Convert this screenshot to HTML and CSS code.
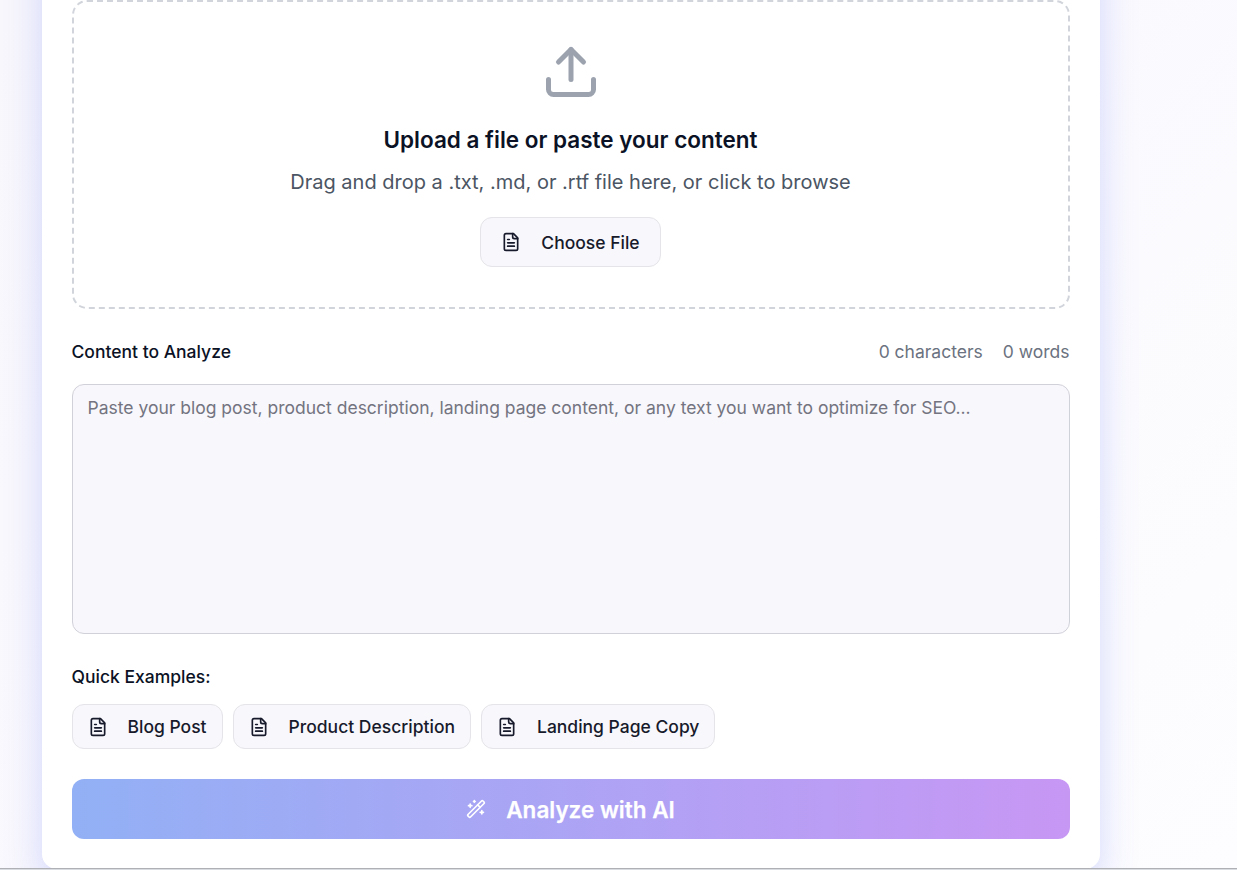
FILE: index.html
```html
<!DOCTYPE html>
<html lang="en">
<head>
<meta charset="utf-8">
<title>Content Analyzer</title>
<link rel="stylesheet" href="styles.css">
</head>
<body>
<svg class="sprite" aria-hidden="true">
  <symbol id="file-text" viewBox="0 0 24 24"><path d="M15 2H6a2 2 0 0 0-2 2v16a2 2 0 0 0 2 2h12a2 2 0 0 0 2-2V7Z"/><path d="M14 2v4a2 2 0 0 0 2 2h4"/><path d="M10 9H8"/><path d="M16 13H8"/><path d="M16 17H8"/></symbol>
</svg>
<div class="viewport">
<main class="card">
  <section class="dropzone">
    <svg class="upload-icon" viewBox="0 0 24 24"><path d="M21 15v4a2 2 0 0 1-2 2H5a2 2 0 0 1-2-2v-4"/><path d="M17 8l-5-5-5 5"/><path d="M12 3v12"/></svg>
    <h3 class="drop-title"><span>Upload a file or paste your content</span></h3>
    <p class="drop-text"><span>Drag and drop a .txt, .md, or .rtf file here, or click to browse</span></p>
    <button class="btn btn-file"><svg class="icon"><use href="#file-text"/></svg><span>Choose File</span></button>
  </section>
  <div class="field-head">
    <label class="label" for="content">Content to Analyze</label>
    <div class="counts"><span>0 characters</span><span>0 words</span></div>
  </div>
  <textarea class="content" id="content" placeholder="Paste your blog post, product description, landing page content, or any text you want to optimize for SEO..."></textarea>
  <div class="label examples-label">Quick Examples:</div>
  <div class="examples">
    <button class="btn"><svg class="icon"><use href="#file-text"/></svg><span>Blog Post</span></button>
    <button class="btn"><svg class="icon"><use href="#file-text"/></svg><span>Product Description</span></button>
    <button class="btn"><svg class="icon"><use href="#file-text"/></svg><span>Landing Page Copy</span></button>
  </div>
  <button class="analyze"><svg class="icon" viewBox="0 0 24 24"><path d="m21.64 3.64-1.28-1.28a1.21 1.21 0 0 0-1.72 0L2.36 18.64a1.21 1.21 0 0 0 0 1.72l1.28 1.28a1.2 1.2 0 0 0 1.72 0L21.64 5.36a1.2 1.2 0 0 0 0-1.72"/><path d="m14 7 3 3"/><path d="M5 6v4"/><path d="M19 14v4"/><path d="M10 2v2"/><path d="M7 8H3"/><path d="M21 16h-4"/><path d="M11 3H9"/></svg><span>Analyze with AI</span></button>
</main>
</div>
<div class="edge"></div>
</body>
</html>
```
FILE: styles.css
```css
* { box-sizing: border-box; }
body {
  margin: 0;
  height: 870px;
  overflow: hidden;
  font-family: Inter, "Liberation Sans", sans-serif;
  font-size: 17.5px;
  line-height: 25px;
  color: #0b1225;
  background: #fff;
}
.sprite { display: none; }
.viewport {
  height: 868px;
  padding-left: 41.5px;
  overflow: hidden;
  background: linear-gradient(135deg, #f8f7fc 0%, #faf9fe 50%, #fcfcfe 85%, #fdfdff 100%);
}
.edge { height: 2px; background: #d9dde2; border-top: 1px solid #aeb0b5; }
.card {
  width: 1058px;
  height: 949px;
  margin-top: -80px;
  padding: 80px 30px 0;
  background: #fff;
  border-radius: 15px;
  box-shadow: 0 20px 38px rgba(85, 105, 241, .24);
}
.dropzone {
  height: 309px;
  padding: 40px 20px;
  border: 2px dashed #d1d5db;
  border-radius: 15px;
  display: flex;
  flex-direction: column;
  align-items: center;
}
svg { fill: none; stroke: currentColor; stroke-width: 2; stroke-linecap: round; stroke-linejoin: round; flex: none; }
.upload-icon { width: 60px; height: 60px; color: #9ca3af; }
.drop-title { margin: 20px 0 0; font-size: 22.5px; line-height: 35px; font-weight: 600; white-space: nowrap; }
.drop-text { margin: 10px 0 20px; font-size: 20px; line-height: 30px; color: #4b5563; white-space: nowrap; }
.btn {
  height: 45px;
  padding: 0 15px;
  display: flex;
  align-items: center;
  gap: 20px;
  background: #f8f7fc;
  border: 1px solid #e4e4e9;
  border-radius: 12px;
  color: #171a2b;
  font: 500 17.5px/25px Inter, "Liberation Sans", sans-serif;
  white-space: nowrap;
}
.btn-file { height: 50px; padding: 0 20px; }
.icon { width: 20px; height: 20px; }
.field-head { margin-top: 30px; display: flex; justify-content: space-between; }
.label { font-weight: 500; }
.counts { display: flex; gap: 20px; color: #6b7280; }
.content {
  display: block;
  width: 100%;
  height: 250px;
  margin: 20px 0 30px;
  padding: 10px 15px;
  background: #f8f7fc;
  border: 1px solid #d1d1da;
  border-radius: 12px;
  resize: none;
  font: 400 17.5px/25px Inter, "Liberation Sans", sans-serif;
}
.content::placeholder { color: #737480; }
.examples-label { margin-bottom: 15px; }
.examples { display: flex; gap: 10px; }
.analyze {
  width: 100%;
  height: 60px;
  margin-top: 30px;
  display: flex;
  align-items: center;
  justify-content: center;
  gap: 20px;
  border: 0;
  border-radius: 12px;
  background: linear-gradient(90deg, #92b0f5, #c797f4);
  color: #fff;
  font: 600 22.5px/35px Inter, "Liberation Sans", sans-serif;
  -webkit-text-stroke: .25px #fff;
}
```
